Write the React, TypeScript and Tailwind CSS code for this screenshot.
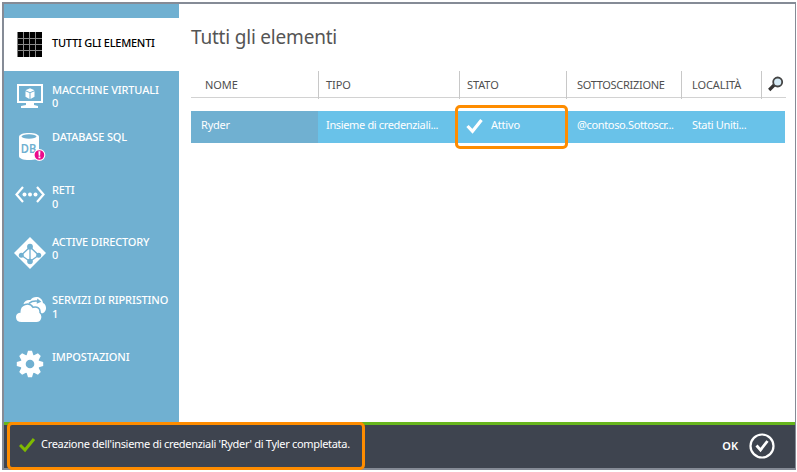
import type { ReactNode } from "react";

const icons: Record<string, ReactNode> = {
  vm: (
    <svg width="26" height="25" viewBox="0 0 26 25" className="absolute left-[13px] top-[1px]">
      <rect x="1" y="1" width="24" height="17" fill="none" stroke="#fff" strokeWidth="2" />
      <path d="M9 18h8v3l4 1v2H4v-2l5-1z" fill="#fff" />
      <path d="M13 4.200l4.500 2-4.500 2-4.500-2zM8.500 7.200l4 1.800v6l-4-2.200zM17.500 7.200l-4 1.800v6l4-2.200z" fill="#fff" />
    </svg>
  ),
  db: (
    <svg width="28" height="30" viewBox="0 0 28 30" className="absolute left-[14px] top-[3px]">
      <path d="M1 4C1 1.500 5 0 11 0s10 1.500 10 4v19c0 2.500-4 4-10 4S1 25.500 1 23z" fill="#fff" />
      <ellipse cx="11" cy="3.500" rx="7.500" ry="2.200" fill="#70b0d1" />
      <text x="2.800" y="20.300" fontSize="11.800" fontWeight="600" fill="#70b0d1" textLength="15.500" lengthAdjust="spacingAndGlyphs">DB</text>
      <circle cx="21.400" cy="22" r="5.400" fill="#eb0a8c" stroke="#fff" strokeWidth="1.100" />
      <path d="M20.400 18.300h2l-.3 4.500h-1.400zM20.500 23.600h1.900v1.700h-1.900z" fill="#fff" />
    </svg>
  ),
  net: (
    <svg width="30" height="17" viewBox="0 0 30 17" className="absolute left-[11px] top-[3px]">
      <path d="M8 1L1.500 8.500 8 16M22 1l6.500 7.500L22 16" fill="none" stroke="#fff" strokeWidth="2.200" />
      <circle cx="9.500" cy="8.500" r="2" fill="#fff" />
      <circle cx="15" cy="8.500" r="2" fill="#fff" />
      <circle cx="20.500" cy="8.500" r="2" fill="#fff" />
    </svg>
  ),
  ad: (
    <svg width="32" height="32" viewBox="0 0 32 32" className="absolute left-[10px] top-[2px]">
      <path d="M16 0l16 16-16 16L0 16z" fill="#fff" />
      <path d="M16 10L7.300 18.300 16 24.500l8.700-6.200zM16 10v14" fill="none" stroke="#70b0d1" strokeWidth="1.300" />
      <g fill="#70b0d1">
        <circle cx="16" cy="9.700" r="2.900" />
        <circle cx="7.300" cy="18.300" r="2.500" />
        <circle cx="24.700" cy="18.300" r="2.500" />
        <circle cx="16" cy="24.500" r="2.800" />
      </g>
    </svg>
  ),
  cloud: (
    <svg width="32" height="27" viewBox="0 0 32 27" className="absolute left-[11px] top-[3px]">
      <path d="M8.500 8C9.500 4.500 12.500 3.500 15.500 4 18-.5 27-.5 28 7c3.500 1.500 4 6.800 1.300 9.200-.7.700-1.800 1.200-3.300 1.300L14 16z" fill="#fff" />
      <path d="M14 7.300c3-2.500 6-2.500 9.500-2" fill="none" stroke="#70b0d1" strokeWidth="1.500" />
      <path d="M22.300 2.500l4 3.300-4.600 1.900z" fill="#70b0d1" />
      <path d="M6.500 26.800C-1.500 26.800-1.500 16.500 4.800 16 4.500 8 14.500 5.500 18 11.300c4.200-1.300 7.500 1.200 7 5.200 4 3.500 1.800 10.300-3.500 10.300z" fill="#fff" stroke="#70b0d1" strokeWidth="1.500" />
    </svg>
  ),
  gear: (
    <svg width="28" height="28" viewBox="-14 -14 28 28" className="absolute left-[12px] top-0">
      <g fill="#fff">
        {[0, 45, 90, 135].map((angle) => (
          <path key={angle} d="M-2-13.200h4l1.300 4.200v18l-1.300 4.200h-4l-1.300-4.200V-9z" transform={`rotate(${angle})`} />
        ))}
        <circle r="9.500" />
      </g>
      <circle r="4.300" fill="#70b0d1" />
    </svg>
  ),
};

function NavItem({ icon, label, count, height, tight }: { icon: string; label: string; count?: string; height: string; tight?: boolean }) {
  return (
    <li className={`relative shrink-0 pl-[48px] text-[11px] font-medium leading-[14px] text-white ${height}`}>
      {icons[icon]}
      <div className="whitespace-nowrap tracking-[-0.15px]">{label}</div>
      {count && <div className={tight ? "leading-[12px]" : ""}>{count}</div>}
    </li>
  );
}

export default function App() {
  return (
    <div className="h-[472px] w-[797px] bg-white pl-[2px] pt-[2px] font-['Noto_Sans',sans-serif]">
      <div className="relative flex h-[468px] w-[794px] flex-col border-2 border-r border-[#858b96] bg-white">
        <div className="flex h-[418px] shrink-0">
          <aside className="w-[175px] shrink-0 bg-[#70b0d1] pt-[14px]">
            <div className="flex h-[53px] items-center bg-white pl-[13px]">
              <svg width="26" height="26" viewBox="0 0 26 26" className="shrink-0">
                <path d="M.5 0h24.500v25H.5z" fill="#000" />
                <path d="M6.500 0v25M12.500 0v25M18.500 0v25M.5 6.500h24.500M.5 12.500h24.500M.5 18.500h24.500" stroke="#8a8a8a" strokeWidth="1" />
              </svg>
              <span className="relative -top-[2px] ml-[9px] whitespace-nowrap text-[11px] font-medium leading-[14px] tracking-[-0.25px] text-black">TUTTI GLI ELEMENTI</span>
            </div>
            <ul className="flex flex-col pt-[12px]">
              <NavItem icon="vm" label="MACCHINE VIRTUALI" count="0" height="h-[47px]" tight />
              <NavItem icon="db" label="DATABASE SQL" height="h-[53px]" />
              <NavItem icon="net" label="RETI" count="0" height="h-[52px]" />
              <NavItem icon="ad" label="ACTIVE DIRECTORY" count="0" height="h-[58px]" tight />
              <NavItem icon="cloud" label="SERVIZI DI RIPRISTINO" count="1" height="h-[57px]" />
              <NavItem icon="gear" label="IMPOSTAZIONI" height="h-[57px]" />
            </ul>
          </aside>
          <main className="w-[607px] pl-[12px] pt-[19px]">
            <h1 className="h-[48px] whitespace-nowrap text-[19px] leading-[28px] tracking-[-0.2px] text-[#555]">Tutti gli elementi</h1>
            <div className="grid h-[27px] w-[595px] grid-cols-[128px_141px_107px_115px_80px_24px] border-b border-[#d2d2d2] text-[11px] leading-[28px] tracking-[-0.1px] text-[#505050]">
              <div className="border-r border-[#c8c8c8] pl-[14px]">NOME</div>
              <div className="border-r border-[#c8c8c8] pl-[7px]">TIPO</div>
              <div className="border-r border-[#c8c8c8] pl-[7px]">STATO</div>
              <div className="border-r border-[#c8c8c8] pl-[10px] tracking-[-0.3px]">SOTTOSCRIZIONE</div>
              <div className="border-r border-[#c8c8c8] pl-[10px]">LOCALITÀ</div>
              <svg width="16" height="16" viewBox="0 0 16 16" className="ml-[6px] mt-[5px]">
                <path d="M1.200 14l5-5" stroke="#333" strokeWidth="3.200" />
                <circle cx="9.700" cy="6" r="4.500" fill="#d5eaf5" stroke="#444" strokeWidth="1.800" />
              </svg>
            </div>
            <div className="mt-[13px] grid h-[32px] w-[594px] grid-cols-[127px_142px_106px_116px_103px] bg-[#69c2e9] text-[11px] leading-[28px] tracking-[-0.35px] text-white">
              <div className="bg-[#70b0d1] pl-[10px] tracking-[-0.2px]">Ryder</div>
              <div className="whitespace-nowrap pl-[8px]">Insieme di credenziali...</div>
              <div className="relative flex pl-[6px]">
                <svg width="18" height="16" viewBox="0 0 18 16" className="mt-[7px]">
                  <path d="M1.500 8l5 5.300L15.500 2" fill="none" stroke="#fff" strokeWidth="3.200" />
                </svg>
                <span className="ml-[7px] tracking-[-0.2px]">Attivo</span>
                <div className="absolute left-[-5px] top-[-6px] h-[44px] w-[113px] rounded-[5px] border-[3px] border-[#fe8c00]" />
              </div>
              <div className="whitespace-nowrap pl-[11px]">@contoso.Sottoscr...</div>
              <div className="whitespace-nowrap pl-[10px]">Stati Uniti...</div>
            </div>
          </main>
        </div>
        <footer className="flex h-[46px] items-center border-t-[3px] border-[#67b51d] bg-[#3e444f] pb-[2px] text-[11px] text-white">
          <svg width="17" height="16" viewBox="0 0 17 16" className="relative -top-px ml-[15px]">
            <path d="M1 8l5 5L15 2" fill="none" stroke="#7fba00" strokeWidth="3" />
          </svg>
          <span className="ml-[5px] whitespace-nowrap pb-[2px] tracking-[-0.31px]">Creazione dell'insieme di credenziali 'Ryder' di Tyler completata.</span>
          <b className="ml-auto pt-[1px] font-semibold">OK</b>
          <svg width="26" height="26" viewBox="0 0 26 26" className="ml-[11px] mr-[20px]">
            <circle cx="13" cy="13" r="11.500" fill="none" stroke="#fff" strokeWidth="2.200" />
            <path d="M7.500 12.500l4 4.500 7-9" fill="none" stroke="#fff" strokeWidth="2.800" />
          </svg>
        </footer>
        <div className="absolute left-[3px] top-[418px] h-[48px] w-[358px] rounded-[5px] border-[3px] border-[#fe8c00]" />
      </div>
    </div>
  );
}
